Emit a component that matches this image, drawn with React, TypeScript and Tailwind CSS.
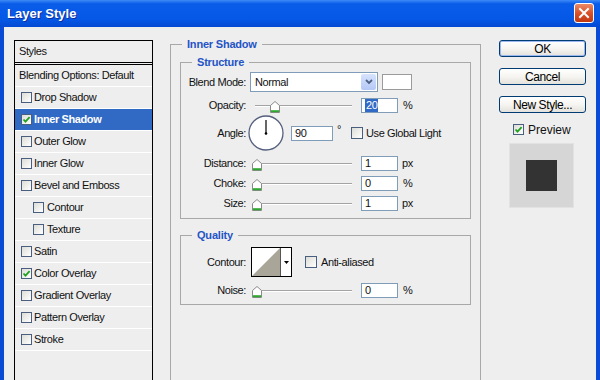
import type { ReactNode } from "react";
import clsx from "clsx";

type Item = {
  label: string;
  noBox?: boolean;
  checked?: boolean;
  selected?: boolean;
  indent?: boolean;
};

const items: Item[] = [
  { label: "Blending Options: Default", noBox: true },
  { label: "Drop Shadow" },
  { label: "Inner Shadow", checked: true, selected: true },
  { label: "Outer Glow" },
  { label: "Inner Glow" },
  { label: "Bevel and Emboss" },
  { label: "Contour", indent: true },
  { label: "Texture", indent: true },
  { label: "Satin" },
  { label: "Color Overlay", checked: true },
  { label: "Gradient Overlay" },
  { label: "Pattern Overlay" },
  { label: "Stroke" },
];

function CheckBox({ checked, big }: { checked?: boolean; big?: boolean }) {
  return (
    <span
      className={clsx(
        "flex shrink-0 items-center justify-center border border-[#4a5f80] bg-gradient-to-br from-[#dcdcd7] to-white",
        big ? "h-[12px] w-[12px]" : "h-[11px] w-[11px]"
      )}
    >
      {checked && (
        <svg width="9" height="9" viewBox="0 0 9 9">
          <path d="M1.5 4.5 L3.5 6.6 L7.6 2.2" fill="none" stroke="#21a121" strokeWidth="1.8" />
        </svg>
      )}
    </span>
  );
}

function Slider({ at }: { at: number }) {
  return (
    <div className="relative ml-[6px] h-[15px] w-[100px]">
      <div className="absolute left-[3px] right-0 top-[7px] h-[2px] border-t border-b border-t-[#a3a3a3] border-b-white" />
      <svg className="absolute top-[3px]" style={{ left: at }} width="10" height="12" viewBox="0 0 10 12">
        <path d="M0.5 4.5 L5 0.5 L9.5 4.5 V11.5 H0.5 Z" fill="#fff" stroke="#8a8a8a" />
        <path d="M1 10.2 H9" stroke="#2fa82f" strokeWidth="2" />
      </svg>
    </div>
  );
}

function NumBox({ children, wide }: { children: ReactNode; wide?: boolean }) {
  return (
    <div
      className={clsx(
        "flex h-[15px] items-center border border-[#7f9db9] bg-white pl-[3px] leading-[13px]",
        wide ? "w-[42px]" : "w-[37px]"
      )}
    >
      {children}
    </div>
  );
}

function Label({ children }: { children: ReactNode }) {
  return <span className="w-[65px] shrink-0 text-right">{children}</span>;
}

function SliderRow({ label, at, value, unit, className }: { label: string; at: number; value: ReactNode; unit: string; className: string }) {
  return (
    <div className={clsx("flex h-[15px] items-center", className)}>
      <Label>{label}</Label>
      <Slider at={at} />
      <div className="ml-[9px]">
        <NumBox>{value}</NumBox>
      </div>
      <span className={unit === "%" ? "ml-[5px]" : "ml-[4px]"}>{unit}</span>
    </div>
  );
}

function Button({ children, primary }: { children: ReactNode; primary?: boolean }) {
  return (
    <button
      className={clsx(
        "flex h-[17px] w-[87px] items-center justify-center rounded-[3px] border border-[#003c74] bg-gradient-to-b from-white via-[#f6f5f1] to-[#e3e2dc] text-[12px] leading-none text-black",
        primary && "shadow-[inset_0_0_0_1px_#9bb7f0]"
      )}
    >
      {children}
    </button>
  );
}

export default function App() {
  return (
    <div className="h-[380px] w-[600px] overflow-hidden font-['Liberation_Sans',Arial,sans-serif] text-[11px] tracking-[-0.4px] text-[#111]">
      <div className="flex h-[27px] items-center justify-between bg-[linear-gradient(180deg,#3d8af7_0%,#0a5de9_14%,#0558e6_70%,#0449d3_100%)] pl-[7px] pr-[6px]">
        <span className="text-[13px] font-bold leading-none tracking-normal text-white [text-shadow:1px_1px_0_#0f2f9c]">
          Layer Style
        </span>
        <div className="mb-[2px] flex h-[20px] w-[20px] items-center justify-center rounded-[3px] border border-white bg-gradient-to-b from-[#ea8a66] via-[#d9502a] to-[#c1380f]">
          <svg width="12" height="12" viewBox="0 0 12 12">
            <path d="M2 2 L10 10 M10 2 L2 10" stroke="#fff" strokeWidth="2" strokeLinecap="square" />
          </svg>
        </div>
      </div>

      <div className="flex h-[353px] items-start border-x-4 border-[#0a4bd6] bg-[#eeeeee] pl-[10px] pt-[11px]">
        <div className="mt-[2px] h-[400px] w-[139px] shrink-0 border border-black">
          <div className="flex h-[24px] items-center border-b-[3px] border-double border-black pl-[4px]">Styles</div>
          {items.map((it) => (
            <div
              key={it.label}
              className={clsx(
                "flex h-[22px] items-center border-b border-white",
                it.selected && "bg-[#316ac5] font-bold text-white",
                it.noBox ? "pl-[4px]" : it.indent ? "pl-[18px]" : "pl-[6px]"
              )}
            >
              {!it.noBox && <CheckBox checked={it.checked} />}
              <span className={it.noBox ? "" : it.indent ? "ml-[3px]" : "ml-[2px]"}>{it.label}</span>
            </div>
          ))}
        </div>

        <fieldset className="ml-[17px] h-[360px] w-[311px] shrink-0 border border-[#a8a8a8]">
          <legend className="ml-[11px] px-[5px] text-[11px] font-bold leading-[13px] tracking-[-0.2px] text-[#2454c6]">
            Inner Shadow
          </legend>

          <fieldset className="mx-[9px] mt-[5px] border border-[#a8a8a8]">
            <legend className="ml-[11px] px-[5px] font-bold leading-[13px] tracking-[-0.2px] text-[#2454c6]">Structure</legend>
            <div className="pb-[7px] pt-[3px]">
              <div className="flex h-[20px] items-center">
                <Label>Blend Mode:</Label>
                <div className="ml-[4px] flex h-[20px] w-[128px] items-center justify-between border border-[#7f9db9] bg-white pl-[4px]">
                  <span>Normal</span>
                  <div className="mr-[1px] flex h-[16px] w-[15px] items-center justify-center rounded-[2px] bg-gradient-to-b from-[#d7e3fd] to-[#b4c8f6]">
                    <svg width="8" height="6" viewBox="0 0 8 6">
                      <path d="M1 1 L4 4 L7 1" fill="none" stroke="#4d6185" strokeWidth="1.8" />
                    </svg>
                  </div>
                </div>
                <div className="ml-[4px] h-[16px] w-[30px] border border-[#9b9b9b] bg-white" />
              </div>

              <div className="mt-[6px] flex h-[15px] items-center">
                <Label>Opacity:</Label>
                <Slider at={18} />
                <div className="ml-[9px]">
                  <NumBox>
                    <span className="bg-[#316ac5] px-[1px] text-white">20</span>
                  </NumBox>
                </div>
                <span className="ml-[5px]">%</span>
              </div>

              <div className="mt-[2px] flex h-[36px] items-center">
                <Label>Angle:</Label>
                <svg className="ml-[2px] shrink-0" width="36" height="36" viewBox="0 0 36 36">
                  <circle cx="18" cy="18" r="17" fill="#fff" stroke="#55607f" strokeWidth="1.3" />
                  <line x1="18" y1="18.5" x2="18" y2="5" stroke="#000" strokeWidth="1.2" />
                  <circle cx="18" cy="18.5" r="1.3" fill="#000" />
                </svg>
                <div className="ml-[7px]">
                  <NumBox wide>90</NumBox>
                </div>
                <span className="mb-[8px] ml-[4px]">°</span>
                <div className="ml-[10px]">
                  <CheckBox big />
                </div>
                <span className="ml-[3px]">Use Global Light</span>
              </div>

              <SliderRow className="mt-[5px]" label="Distance:" at={0} value="1" unit="px" />
              <SliderRow className="mt-[5px]" label="Choke:" at={0} value="0" unit="%" />
              <SliderRow className="mt-[5px]" label="Size:" at={0} value="1" unit="px" />
            </div>
          </fieldset>

          <fieldset className="mx-[9px] mt-[10px] border border-[#a8a8a8]">
            <legend className="ml-[11px] px-[5px] font-bold leading-[13px] tracking-[-0.2px] text-[#2454c6]">Quality</legend>
            <div className="pb-[6px] pt-[5px]">
              <div className="flex h-[30px] items-center">
                <Label>Contour:</Label>
                <div className="ml-[5px] flex h-[30px] w-[41px] border border-black bg-white">
                  <svg width="28" height="28" viewBox="0 0 28 28">
                    <polygon points="0,28 28,0 28,28" fill="#a9a699" />
                  </svg>
                  <div className="flex w-[11px] items-center justify-center border-l border-[#555]">
                    <svg width="5" height="3" viewBox="0 0 5 3">
                      <polygon points="0,0 5,0 2.5,3" fill="#000" />
                    </svg>
                  </div>
                </div>
                <div className="ml-[13px]">
                  <CheckBox big />
                </div>
                <span className="ml-[4px]">Anti-aliased</span>
              </div>
              <SliderRow className="mt-[6px]" label="Noise:" at={0} value="0" unit="%" />
            </div>
          </fieldset>
        </fieldset>

        <div className="ml-[18px] mt-[2px] flex w-[87px] shrink-0 flex-col">
          <Button primary>OK</Button>
          <div className="mt-[11px]">
            <Button>Cancel</Button>
          </div>
          <div className="mt-[11px]">
            <Button>New Style...</Button>
          </div>
          <div className="mt-[10px] flex h-[13px] items-center pl-[14px] text-[12px] tracking-normal">
            <CheckBox checked />
            <span className="ml-[4px]">Preview</span>
          </div>
          <div className="ml-[10px] mt-[7px] flex h-[65px] w-[65px] items-center justify-center border border-[#e2e2e2] bg-[#d6d6d6]">
            <div className="h-[31px] w-[31px] bg-[#333333]" />
          </div>
        </div>
      </div>
    </div>
  );
}
